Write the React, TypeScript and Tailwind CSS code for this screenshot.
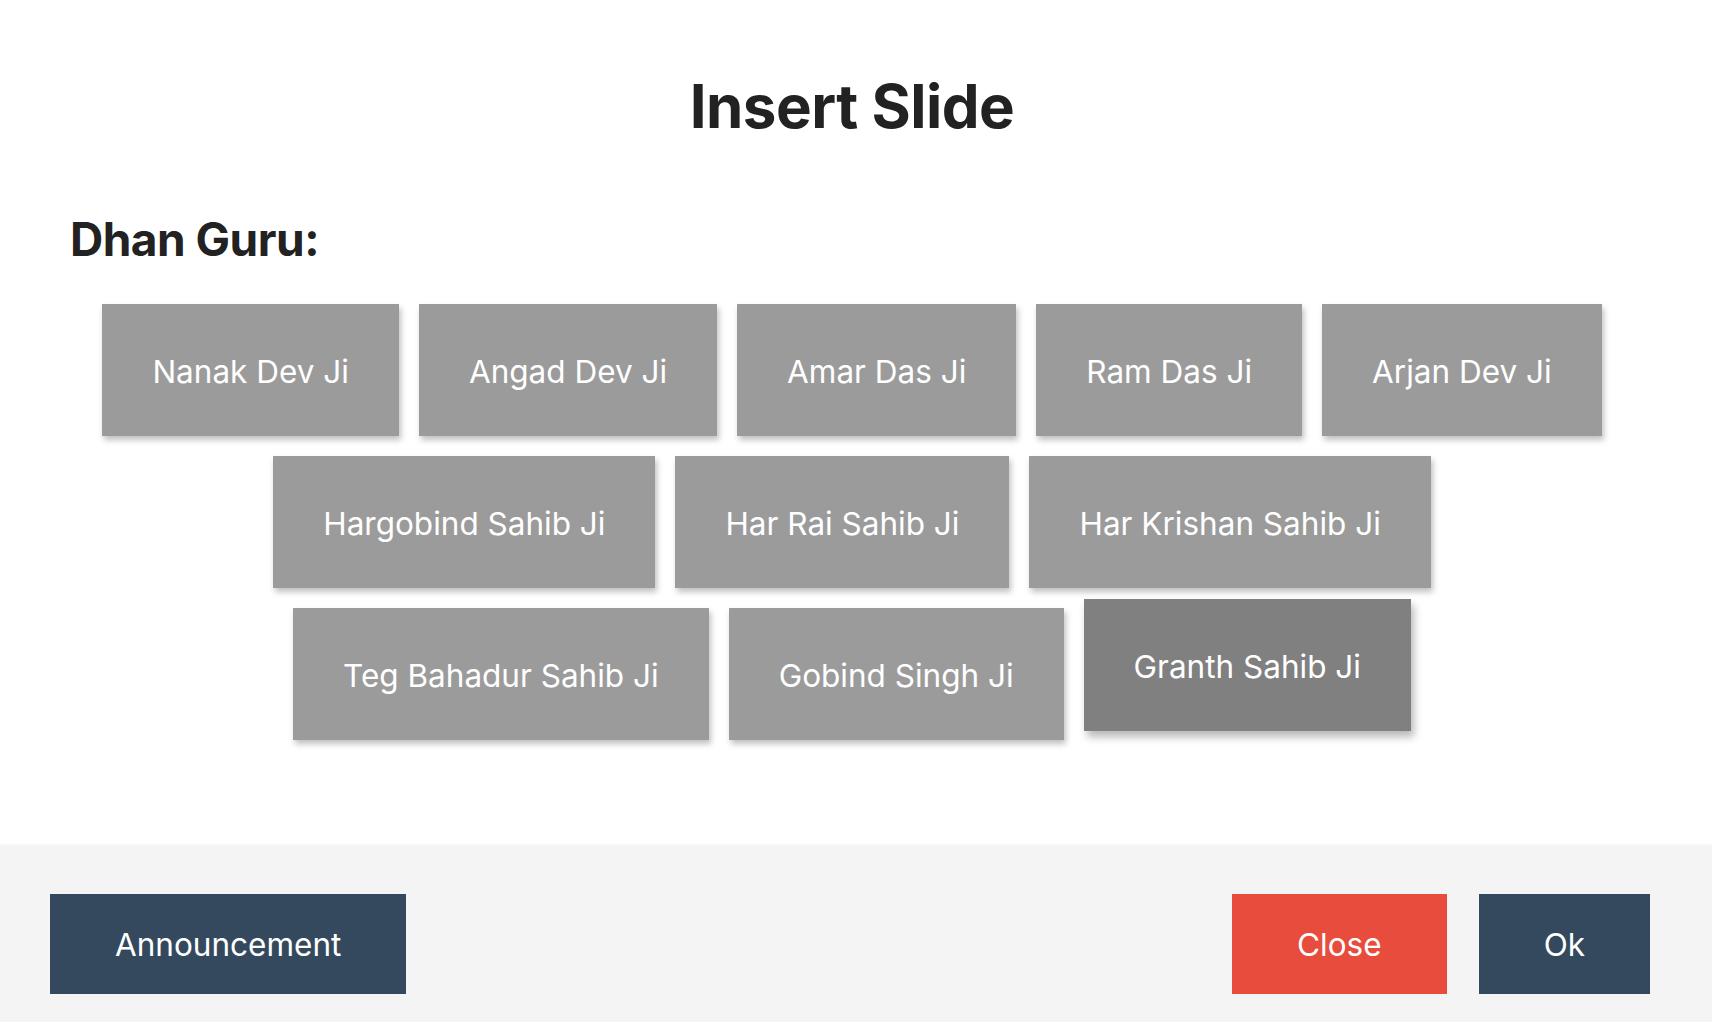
import React from "react";

const gurus: { name: string; active?: boolean }[] = [
  { name: "Nanak Dev Ji" },
  { name: "Angad Dev Ji" },
  { name: "Amar Das Ji" },
  { name: "Ram Das Ji" },
  { name: "Arjan Dev Ji" },
  { name: "Hargobind Sahib Ji" },
  { name: "Har Rai Sahib Ji" },
  { name: "Har Krishan Sahib Ji" },
  { name: "Teg Bahadur Sahib Ji" },
  { name: "Gobind Singh Ji" },
  { name: "Granth Sahib Ji", active: true },
];

export default function App() {
  return (
    <div
      className="flex h-[1022px] w-full flex-col overflow-hidden bg-white"
      style={{ fontFamily: "Inter, 'Noto Sans', 'Liberation Sans', sans-serif" }}
    >
      <div className="flex-1 pr-[8px]">
        <h1 className="mt-[76px] text-center text-[60px] font-bold leading-none tracking-[-0.5px] text-[#222222]">
          Insert Slide
        </h1>
        <h2 className="mt-[80px] pl-[70px] text-[46px] font-bold leading-none tracking-[-0.5px] text-[#222222]">
          Dhan Guru:
        </h2>
        <div className="mx-auto mt-[42px] flex w-[1540px] flex-wrap items-start justify-center gap-[20px]">
          {gurus.map((g) => (
            <button
              key={g.name}
              className={
                g.active
                  ? "h-[132px] -translate-y-[9px] bg-[#808080] px-[50px] pt-[4px] text-[31.5px] leading-none text-white shadow-[3px_6px_8px_rgba(0,0,0,0.28)]"
                  : "h-[132px] bg-[#9b9b9b] px-[50px] pt-[4px] text-[31.5px] leading-none text-white shadow-[2px_4px_6px_rgba(0,0,0,0.25)]"
              }
            >
              {g.name}
            </button>
          ))}
        </div>
      </div>
      <div className="flex h-[177px] shrink-0 items-start justify-between bg-[#f4f4f4] pl-[50px] pr-[62px] pt-[49px] shadow-[0_-1px_2px_rgba(0,0,0,0.03)]">
        <button className="h-[100px] bg-[#34495e] px-[65px] pt-[2px] text-[31.5px] leading-none text-white">
          Announcement
        </button>
        <div className="flex gap-[32px]">
          <button className="h-[100px] bg-[#e74c3c] px-[65px] pt-[2px] text-[31.5px] leading-none text-white">
            Close
          </button>
          <button className="h-[100px] bg-[#34495e] px-[65px] pt-[2px] text-[31.5px] leading-none text-white">
            Ok
          </button>
        </div>
      </div>
    </div>
  );
}
